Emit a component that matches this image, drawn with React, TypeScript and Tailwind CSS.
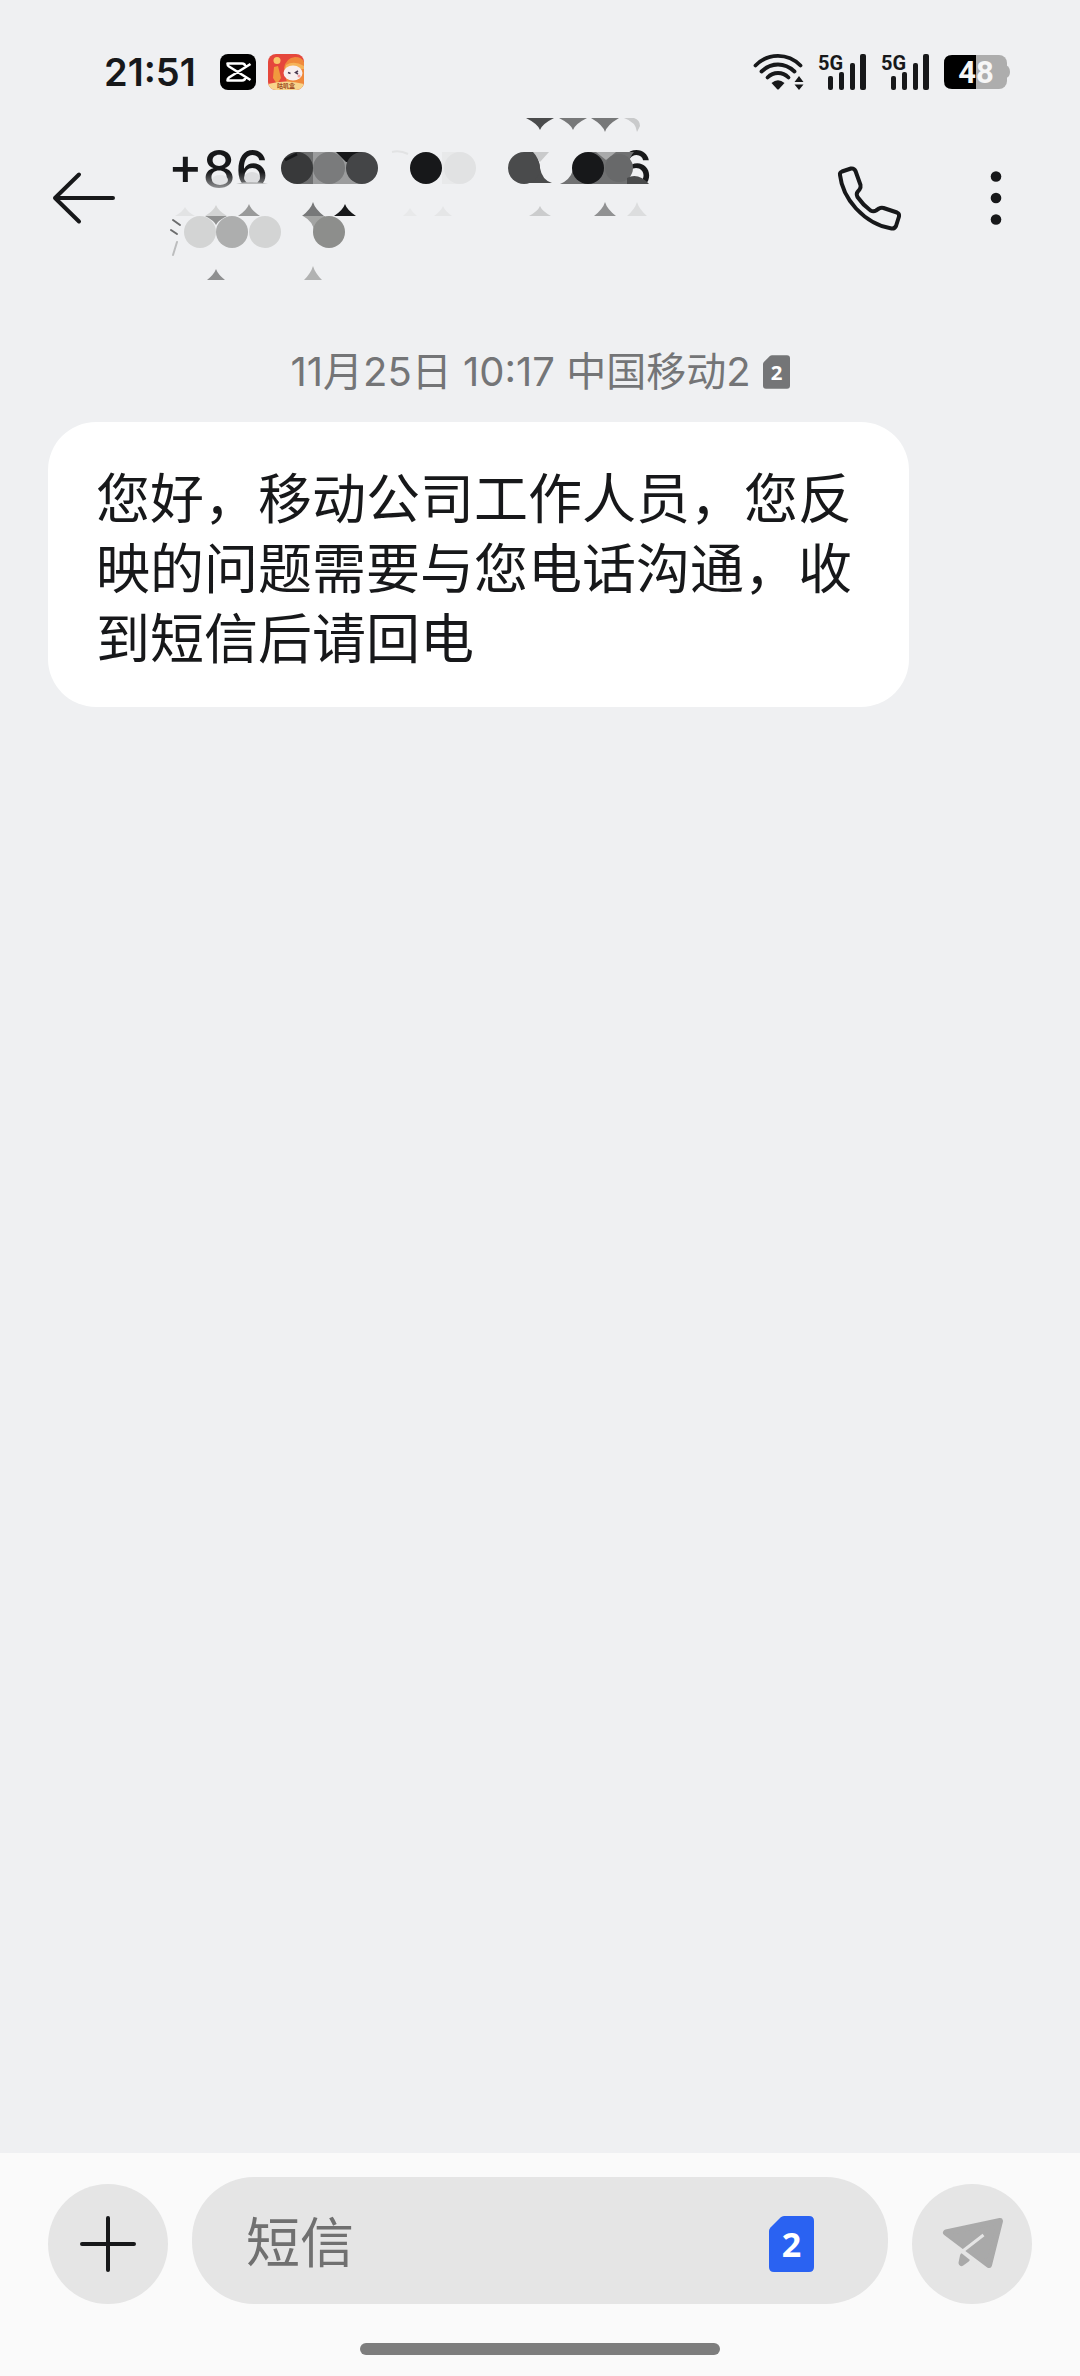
import { useState } from 'react';

const CJK = "font-['Inter','Noto_Sans_CJK_SC',sans-serif]";

interface SimBadgeProps {
  slot: string;
  className: string;
}

function SimBadge({ slot, className }: SimBadgeProps) {
  return (
    <svg viewBox="0 0 45 56" className={className} aria-hidden="true">
      <path d="M15 0H40Q45 0 45 5V51Q45 56 40 56H5Q0 56 0 51V15Q0 13 1.500 11.500L11.500 1.500Q13 0 15 0Z" fill="currentColor" />
      <text x="22.500" y="41" textAnchor="middle" fontSize="34" fontWeight="700" fill="#fff" fontFamily="Noto Sans, sans-serif">
        {slot}
      </text>
    </svg>
  );
}

function VideoAppIcon() {
  return (
    <svg viewBox="0 0 36 36" className="size-9" aria-hidden="true">
      <rect width="36" height="36" rx="8" fill="#000" />
      <path
        d="M30.500 10L9 23.500Q7.500 24.500 7.500 26.500H22Q25 26.500 25 24M30.500 26L9 12.500Q7.500 11.500 7.500 9.500H22Q25 9.500 25 12"
        fill="none"
        stroke="#fff"
        strokeWidth="2.600"
        strokeLinejoin="round"
      />
    </svg>
  );
}

function GameAppIcon() {
  return (
    <svg viewBox="0 0 36 36" className="size-9" aria-hidden="true">
      <defs>
        <clipPath id="game-clip">
          <rect width="36" height="36" rx="8" />
        </clipPath>
      </defs>
      <g clipPath="url(#game-clip)">
        <rect width="36" height="36" fill="#e5473c" />
        <path d="M16 14Q18 4 27 3Q34 3 36 8V34H20Z" fill="#f08a3c" />
        <path d="M18 11Q26 6 36 12V15H17Z" fill="#f6b35a" />
        <path d="M6 13L10 12L13 24L9 30L5 24Z" fill="#f19a3e" />
        <circle cx="9" cy="6.500" r="3.500" fill="#f9c66a" />
        <ellipse cx="25" cy="19" rx="9.500" ry="7.500" fill="#f7eeee" />
        <path d="M20 18.500L22.500 19.500M30 17L27.500 18.500L30 20" stroke="#4b3a52" strokeWidth="1.500" fill="none" />
        <circle cx="31" cy="22" r="1.500" fill="#f3a0a0" />
        <path d="M0 30Q18 25 36 30V36H0Z" fill="#f8d58c" />
        <text x="18" y="34" textAnchor="middle" fontSize="6" fontWeight="700" fill="#9c4a22" fontFamily="Noto Sans CJK SC, sans-serif">
          咕叽盒
        </text>
      </g>
    </svg>
  );
}

function WifiIcon() {
  return (
    <svg viewBox="0 0 52 36" className="h-9 w-[52px]" aria-hidden="true">
      <g fill="none" stroke="#17181a" strokeWidth="3.800" strokeLinecap="round">
        <path d="M2.500 11.500Q12 1.900 25 1.900T47.500 11.500" />
        <path d="M8.500 17.500Q16 10.500 25 10.500T41.500 17.500" />
        <path d="M14.500 23.500Q19 19 25 19T35.500 23.500" />
      </g>
      <path d="M18.500 29Q25 23.500 31.500 29L26 35Q25 36 24 35Z" fill="#17181a" />
      <path d="M46 22L50.500 28H41.500ZM46 36L41.500 30.500H50.500Z" fill="#17181a" />
    </svg>
  );
}

function SignalIcon() {
  return (
    <svg viewBox="0 -1 50 42" className="h-[42px] w-[50px]" aria-label="5G">
      <text x="0" y="18" fontSize="20" fontWeight="700" fill="#17181a" fontFamily="Roboto, sans-serif">
        5G
      </text>
      <g fill="#17181a">
        <rect x="10" y="24" width="5" height="14" rx="2" />
        <rect x="21" y="20" width="5" height="18" rx="2" />
        <rect x="32" y="11" width="5" height="27" rx="2" />
        <rect x="42" y="2" width="6" height="36" rx="2" />
      </g>
    </svg>
  );
}

function BatteryIcon() {
  return (
    <svg viewBox="0 -2 66 38" className="h-[38px] w-[66px]" aria-label="48%">
      <path d="M62 10Q66 12 66 17T62 23Z" fill="#adadad" />
      <rect x="20" width="43" height="34" rx="8" fill="#adadad" />
      <path d="M8 0H32V34H8Q0 34 0 26V8Q0 0 8 0Z" fill="#000" />
      <text x="32" y="28" textAnchor="middle" fontSize="31" fontWeight="700" fill="#f6f6f6" fontFamily="Roboto, sans-serif">
        48
      </text>
    </svg>
  );
}

function StatusBar() {
  return (
    <div className="flex h-[100px] items-center justify-between pt-[44px] pr-[70px] pl-[104px]">
      <div className="flex items-center">
        <span className="w-[116px] font-['Inter',sans-serif] text-[38px] leading-[40px] font-semibold text-[#17181a]">21:51</span>
        <div className="flex gap-3">
          <VideoAppIcon />
          <GameAppIcon />
        </div>
      </div>
      <div className="flex items-center gap-[13px]">
        <WifiIcon />
        <SignalIcon />
        <SignalIcon />
        <BatteryIcon />
      </div>
    </div>
  );
}

// cx, apex y, base y, half width, colour
const peaks: [number, number, number, number, string][] = [
  [185, 207, 216, 10, '#e2e3e4'],
  [216, 205, 216, 11, '#d3d4d4'],
  [249, 204, 216, 11, '#999a9a'],
  [313, 202, 216, 11, '#777879'],
  [345, 204, 216, 11, '#17181a'],
  [410, 208, 216, 7, '#e8e9ea'],
  [443, 206, 216, 9, '#e5e6e7'],
  [540, 206, 216, 11, '#cbcccd'],
  [605, 202, 216, 11, '#909192'],
  [637, 202, 216, 10, '#dcddde'],
  [216, 269, 280, 9, '#8f9091'],
  [313, 266, 280, 9, '#b1b2b2'],
  [540, 130, 118, 14, '#4a4b4c'],
  [573, 130, 118, 14, '#777879'],
  [605, 132, 118, 14, '#777879'],
  [216, 225, 216, 11, '#909191'],
];

// Brush strokes that hide the sender's number
function NumberMask() {
  return (
    <svg viewBox="160 100 520 196" className="absolute inset-0 h-[196px] w-[520px]" aria-hidden="true">
      <defs>
        <linearGradient id="smudge" x1="0" y1="0" x2="0" y2="1">
          <stop offset="0" stopColor="#eff0f2" stopOpacity="0" />
          <stop offset="1" stopColor="#eff0f2" stopOpacity="0.700" />
        </linearGradient>
      </defs>
      <rect x="203" y="172" width="76" height="20" fill="url(#smudge)" />
      <rect x="236" y="184" width="34" height="10" fill="#eff0f2" />
      <ellipse cx="220" cy="180" rx="8" ry="5" fill="#e3e4e6" />
      <ellipse cx="252" cy="178" rx="8" ry="6" fill="#dcdddf" />
      <path d="M236 184Q250 180 268 184Z" fill="#b9babb" />

      {peaks.map(([cx, apex, base, half, fill]) => (
        <path
          key={`${cx}-${apex}`}
          d={`M${cx - half} ${base}Q${cx - 2} ${(apex + base) / 2} ${cx} ${apex}Q${cx + 2} ${(apex + base) / 2} ${cx + half} ${base}Z`}
          fill={fill}
        />
      ))}
      <path d="M624 118H634Q640 120 640 126L637 132Q636 122 624 118Z" fill="#c9cacb" />

      <rect x="297" y="152" width="65" height="32" fill="#9b9c9d" />
      <path d="M336 152H362V162H346Z" fill="#17181a" />
      <circle cx="329" cy="168" r="16" fill="#7a7b7c" />
      <path d="M297 152H313V184H297Z" fill="#6f7071" />
      <circle cx="297" cy="168" r="16" fill="#38393a" />
      <path d="M285 160L297 154" stroke="#17181a" strokeWidth="3" />
      <circle cx="362" cy="168" r="16" fill="#444547" />

      <path d="M392 152Q400 150 408 154" stroke="#e2e3e4" strokeWidth="2" fill="none" />
      <rect x="442" y="152" width="18" height="32" fill="#e8e9ea" />
      <circle cx="460" cy="168" r="16" fill="#e1e2e3" />
      <circle cx="426" cy="168" r="16" fill="#17181a" />

      <path d="M532 152H549L540 162Z" fill="#c9cacb" />
      <path d="M524 152H533Q539 158 540 168Q542 180 552 183H524Z" fill="#4a4b4c" />
      <circle cx="524" cy="168" r="16" fill="#4a4b4c" />

      <path d="M560 184Q570 180 573 170L588 160V152H634Q626 160 628 184Z" fill="#707172" />
      <path d="M596 152H616L606 160Z" fill="#a9aaab" />
      <circle cx="619" cy="168" r="14" fill="#68696a" />
      <circle cx="588" cy="168" r="16" fill="#17181a" />
      <path d="M627 184V178Q638 172 649 184Z" fill="#4a4b4c" />
      <rect x="626" y="184" width="28" height="10" fill="#eff0f2" />

      <circle cx="200" cy="232" r="16" fill="#d3d4d4" />
      <circle cx="232" cy="232" r="16" fill="#adaeae" />
      <circle cx="265" cy="232" r="16" fill="#d3d4d4" />
      <path d="M303 216H325V232H314Q314 222 303 216Z" fill="#a3a4a3" />
      <circle cx="329" cy="232" r="16" fill="#8d8e8c" />
      <g stroke="#6b6c6d" strokeWidth="2" strokeLinecap="round">
        <path d="M173 220L180 225M171 230L177 234" />
        <path d="M177 242L173 255" stroke="#bcbdbe" />
      </g>
    </svg>
  );
}

function Header() {
  return (
    <header className="flex h-[196px] items-center px-12">
      <button type="button" aria-label="返回" className="size-[72px]">
        <svg viewBox="0 0 72 72" className="size-full" fill="none" stroke="#17181a" strokeWidth="4" strokeLinecap="round" strokeLinejoin="round">
          <path d="M31 12.500L7 36L31 59.500M7 36H65" />
        </svg>
      </button>
      <div className="relative ml-10 h-[196px] w-[520px]">
        <h1 className="flex w-[492px] justify-between pt-[42px] pl-2 font-['Inter',sans-serif] text-[52px] leading-[56px] font-medium text-[#17181a]">
          <span>+86</span>
          <span>6</span>
        </h1>
        <NumberMask />
      </div>
      <div className="ml-auto flex items-center gap-[54px]">
        <button type="button" aria-label="拨打电话" className="size-[72px]">
          <svg viewBox="834 162 72 72" className="size-full" fill="none" stroke="#17181a" strokeWidth="4" strokeLinejoin="round">
            <path d="M840 175Q839.500 172.500 842 171.500L851 168.500Q854 168 855.500 171L860.500 185Q861 187.500 859.500 189.500L857.500 192Q856 194 857.500 197Q863 205 870.500 210.500Q873.500 212 876 210.500L879 208.500Q881 207.500 883.500 208L897 212.500Q899.500 213.500 899 216.500L896 226Q894.500 229 891.500 228.500Q872 225.500 856 208.500Q842 193 840 175Z" />
          </svg>
        </button>
        <button type="button" aria-label="更多" className="size-[72px]">
          <svg viewBox="0 0 72 72" className="size-full" fill="#17181a">
            <circle cx="36" cy="14.500" r="5.300" />
            <circle cx="36" cy="36" r="5.300" />
            <circle cx="36" cy="57.500" r="5.300" />
          </svg>
        </button>
      </div>
    </header>
  );
}

function Composer() {
  const [text, setText] = useState('');

  return (
    <footer className="bg-[#fafafa] px-12 pt-6 pb-[21px]">
      <div className="flex items-end gap-6">
        <button type="button" aria-label="添加" className="size-[120px] shrink-0 rounded-full bg-[#e5e5e5]">
          <svg viewBox="0 0 120 120" className="size-full" stroke="#17181a" strokeWidth="4" strokeLinecap="round">
            <path d="M34 60H86M60 34V86" />
          </svg>
        </button>
        <div className="flex h-[127px] min-w-0 flex-1 items-center rounded-[62px] bg-[#e5e5e5] pt-[6px] pr-[74px] pl-[54px]">
          <input
            type="text"
            aria-label="短信"
            placeholder="短信"
            value={text}
            onChange={(e) => setText(e.target.value)}
            className="h-20 min-w-0 flex-1 bg-transparent text-[54px] text-[#17181a] outline-none placeholder:text-[#707070]"
          />
          <button type="button" aria-label="卡 2" className="shrink-0">
            <SimBadge slot="2" className="h-[56px] w-[45px] text-[#2a62f2]" />
          </button>
        </div>
        <button type="button" aria-label="发送" className="size-[120px] shrink-0 rounded-full bg-[#e5e5e5]">
          <svg viewBox="0 0 120 120" className="size-full">
            <g fill="#a9a9a9" stroke="#a9a9a9" strokeWidth="6" strokeLinejoin="round">
              <path d="M34 48.500L88 37L77 81Z" />
              <path d="M51 72L55 75L49.500 79Z" />
            </g>
            <path d="M48 66L68 82M49.500 68L71.500 51" stroke="#e5e5e5" strokeWidth="3" fill="none" />
          </svg>
        </button>
      </div>
      <div className="mx-auto mt-[39px] h-3 w-[360px] max-w-full rounded-full bg-[#7d7d7d]" />
    </footer>
  );
}

export default function App() {
  return (
    <div className={`flex min-h-screen flex-col bg-[#eff0f2] ${CJK}`} lang="zh-CN">
      <StatusBar />
      <Header />
      <main className="flex-1 px-12 pt-12">
        <div className="flex h-14 items-center justify-center gap-3 text-[40px] leading-[56px] font-normal text-[#747577]">
          <time>11月25日 10:17 中国移动2</time>
          <SimBadge slot="2" className="h-[34px] w-[27px]" />
        </div>
        <p className="mt-[22px] w-fit max-w-7/8 rounded-[48px] bg-white px-12 pt-[43px] pb-[32px] text-[54px] leading-[70px] text-[#17181a]">
          您好，移动公司工作人员，您反映的问题需要与您电话沟通，收到短信后请回电
        </p>
      </main>
      <Composer />
    </div>
  );
}
